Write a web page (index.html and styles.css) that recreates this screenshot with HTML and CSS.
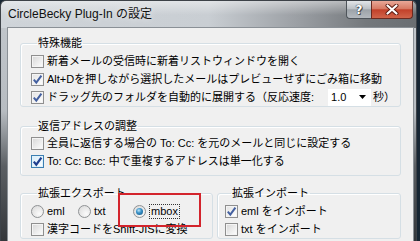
FILE: index.html
```html
<!DOCTYPE html>
<html lang="ja">
<head>
<meta charset="utf-8">
<title>CircleBecky Plug-In の設定</title>
<link rel="stylesheet" href="styles.css">
</head>
<body>
<div class="window">
  <div class="titlebar">
    <span class="title">CircleBecky Plug-In の設定</span>
    <div class="caption-btns">
      <span class="cap-btn help">?</span>
      <span class="cap-btn close">
        <svg width="14" height="11" viewBox="0 0 14 11"><path d="M2.5 1.5 L11.5 9.5 M11.5 1.5 L2.5 9.5" stroke="#5a1a10" stroke-width="4" stroke-linecap="round"/><path d="M2.5 1.5 L11.5 9.5 M11.5 1.5 L2.5 9.5" stroke="#fff" stroke-width="2.2" stroke-linecap="round"/></svg>
      </span>
    </div>
  </div>
  <div class="client">
    <fieldset class="group g1">
      <legend>特殊機能</legend>
      <div class="row"><span class="cb"></span><span class="lbl">新着メールの受信時に新着リストウィンドウを開く</span></div>
      <div class="row"><span class="cb checked"><svg width="11" height="11" viewBox="0 0 11 11"><path d="M1.8 5.6 L4.3 8.6 L9.4 1.6" fill="none" stroke="#4460a0" stroke-width="2"/></svg></span><span class="lbl">Alt+Dを押しながら選択したメールはプレビューせずにごみ箱に移動</span></div>
      <div class="row"><span class="cb checked"><svg width="11" height="11" viewBox="0 0 11 11"><path d="M1.8 5.6 L4.3 8.6 L9.4 1.6" fill="none" stroke="#4460a0" stroke-width="2"/></svg></span><span class="lbl wide">ドラッグ先のフォルダを自動的に展開する（反応速度:</span>
        <span class="combo"><span>1.0</span><svg class="arrow" width="7" height="4" viewBox="0 0 7 4"><path d="M0 0 H7 L3.5 4 Z" fill="#000"/></svg></span><span class="lbl after">秒）</span></div>
    </fieldset>
    <fieldset class="group g2">
      <legend>返信アドレスの調整</legend>
      <div class="row"><span class="cb"></span><span class="lbl">全員に返信する場合の To: Cc: を元のメールと同じに設定する</span></div>
      <div class="row"><span class="cb checked hot"><svg width="11" height="11" viewBox="0 0 11 11"><path d="M1.8 5.6 L4.3 8.6 L9.4 1.6" fill="none" stroke="#1f3f8f" stroke-width="2.2"/></svg></span><span class="lbl">To: Cc: Bcc: 中で重複するアドレスは単一化する</span></div>
    </fieldset>
    <div class="bottom">
      <fieldset class="group g3">
        <legend>拡張エクスポート</legend>
        <div class="row">
          <span class="ritem r1"><span class="rb"></span><span class="lbl">eml</span></span>
          <span class="ritem r2"><span class="rb"></span><span class="lbl">txt</span></span>
          <span class="ritem r3"><span class="rb on"></span><span class="lbl focus">mbox</span><span class="mark"></span></span>
        </div>
        <div class="row"><span class="cb"></span><span class="lbl">漢字コードをShift-JISに変換</span></div>
      </fieldset>
      <fieldset class="group g4">
        <legend>拡張インポート</legend>
        <div class="row"><span class="cb checked"><svg width="11" height="11" viewBox="0 0 11 11"><path d="M1.8 5.6 L4.3 8.6 L9.4 1.6" fill="none" stroke="#4460a0" stroke-width="2"/></svg></span><span class="lbl">eml をインポート</span></div>
        <div class="row"><span class="cb"></span><span class="lbl">txt をインポート</span></div>
      </fieldset>
    </div>
  </div>
</div>
</body>
</html>
```
FILE: styles.css
```css
* { box-sizing: border-box; }
html, body { margin: 0; height: 100%; }
body {
  background: #172634;
  font-family: "Liberation Sans", "Noto Sans CJK JP", sans-serif;
  font-size: 11px;
  color: #000;
  overflow: hidden;
}
.window {
  width: 417px;
  height: 241px;
  border: 1px solid #3d4248;
  border-bottom: none;
  border-radius: 6px 6px 0 0;
  padding: 0 2px 0 6px;
  display: flex;
  flex-direction: column;
  background:
    linear-gradient(rgba(255,255,255,0.45), rgba(255,255,255,0) 14px) top / 100% 14px no-repeat,
    linear-gradient(to right, #cfd4d9 0%, #c9ced3 50%, #9a9ea3 72%, #74787c 88%, #6a6e72 100%) top / 100% 27px no-repeat,
    linear-gradient(to bottom, #c3c8cd 0px, #b7bcc1 110px, #5b5f63 165px, #33363a 241px);
}
.titlebar {
  height: 26px;
  flex: none;
  display: flex;
  align-items: flex-start;
}
.title {
  font-family: "Liberation Sans", "Noto Sans CJK JP", sans-serif;
  font-size: 12px;
  line-height: 14px;
  padding: 6px 0 0 1px;
  color: #111;
  text-shadow: 0 0 6px rgba(255,255,255,0.8);
}
.caption-btns {
  margin-left: auto;
  margin-right: 1px;
  display: flex;
}
.cap-btn {
  height: 18px;
  display: flex;
  align-items: center;
  justify-content: center;
  border: 1px solid #4e545a;
  border-top: none;
}
.help {
  width: 25px;
  border-right: none;
  border-radius: 0 0 0 4px;
  background: linear-gradient(#e2e5e8, #bcc1c6 45%, #9da3a9 52%, #b4b9be);
  color: #fff;
  font-family: "DejaVu Sans", sans-serif;
  font-weight: bold;
  font-size: 12px;
  text-shadow: 0 0 1px #333, 0 0 1px #333, 1px 1px 0 #555;
}
.close {
  width: 42px;
  border-radius: 0 0 4px 0;
  border-color: #6b2a20;
  background: linear-gradient(#e9a898, #d77a64 45%, #c2412a 52%, #d0644a);
}
.client {
  flex: 1;
  border: 1px solid #8a9096;
  border-bottom: none;
  background: #f0f0f0;
  padding: 8px 12px 0 12px;
}
.group {
  margin: 0;
  border: 1px solid #d5dfe5;
  border-radius: 3px;
  padding: 2px 0 0 10px;
  min-width: 0;
  box-shadow: inset 1px 1px 0 #fff;
}
.group legend {
  padding: 0 1px;
  margin-left: 6px;
  line-height: 14px;
  font-size: 11px;
}
.g1 { padding-bottom: 0; }
.g2 { margin-top: 12px; padding-top: 1px; padding-bottom: 5px; }
.bottom {
  margin-top: 10px;
  display: flex;
  gap: 4px;
}
.g3 { width: 193px; flex: none; }
.g4 { flex: 1; padding-left: 7px; }
.row {
  display: flex;
  align-items: center;
  height: 18px;
  white-space: nowrap;
}
.cb {
  width: 13px;
  height: 13px;
  flex: none;
  margin-right: 3px;
  border: 1px solid #8f8f8f;
  background: linear-gradient(135deg, #d6d6d6, #f6f6f6 80%, #fff);
  box-shadow: inset 0 0 0 1px #f4f4f4;
  display: flex;
  align-items: center;
  justify-content: center;
}
.cb.checked {
  background: linear-gradient(135deg, #e2e2e2, #fafafa 80%, #fff);
}
.cb.hot {
  border-color: #3c7fb1;
  background: linear-gradient(135deg, #d8ecf8, #f4fbff 80%, #fff);
  box-shadow: inset 0 0 0 1px #dff2fc;
}
.cb svg { display: block; }
.lbl { line-height: 14px; }
.combo {
  width: 43px;
  height: 17px;
  margin-left: 14px;
  background: #fff;
  display: flex;
  align-items: center;
  padding-left: 3px;
}
.combo .arrow { margin-left: auto; margin-right: 5px; }
.after { margin-left: 2px; }
.ritem {
  display: flex;
  align-items: center;
  height: 18px;
}
.r1 { width: 47px; }
.r2 { width: 55px; }
.r3 { position: relative; }
.rb {
  width: 13px;
  height: 13px;
  flex: none;
  margin-right: 3px;
  border-radius: 50%;
  border: 1px solid #8f9294;
  background: radial-gradient(circle at 65% 70%, #fbfbfb, #dcdcdc 85%);
  position: relative;
}
.rb.on::after {
  content: "";
  position: absolute;
  left: 2px;
  top: 2px;
  width: 7px;
  height: 7px;
  border-radius: 50%;
  background: radial-gradient(circle at 40% 35%, #bfe6f8 0, #3b93c9 40%, #0c4f7d 100%);
}
.focus {
  margin-left: 0;
  border: 1px dotted #333;
  padding: 0 1px;
  line-height: 13px;
}
.mark {
  position: absolute;
  left: -15px;
  top: -9px;
  width: 83px;
  height: 34px;
  border: 2px solid #d3242c;
}
```
